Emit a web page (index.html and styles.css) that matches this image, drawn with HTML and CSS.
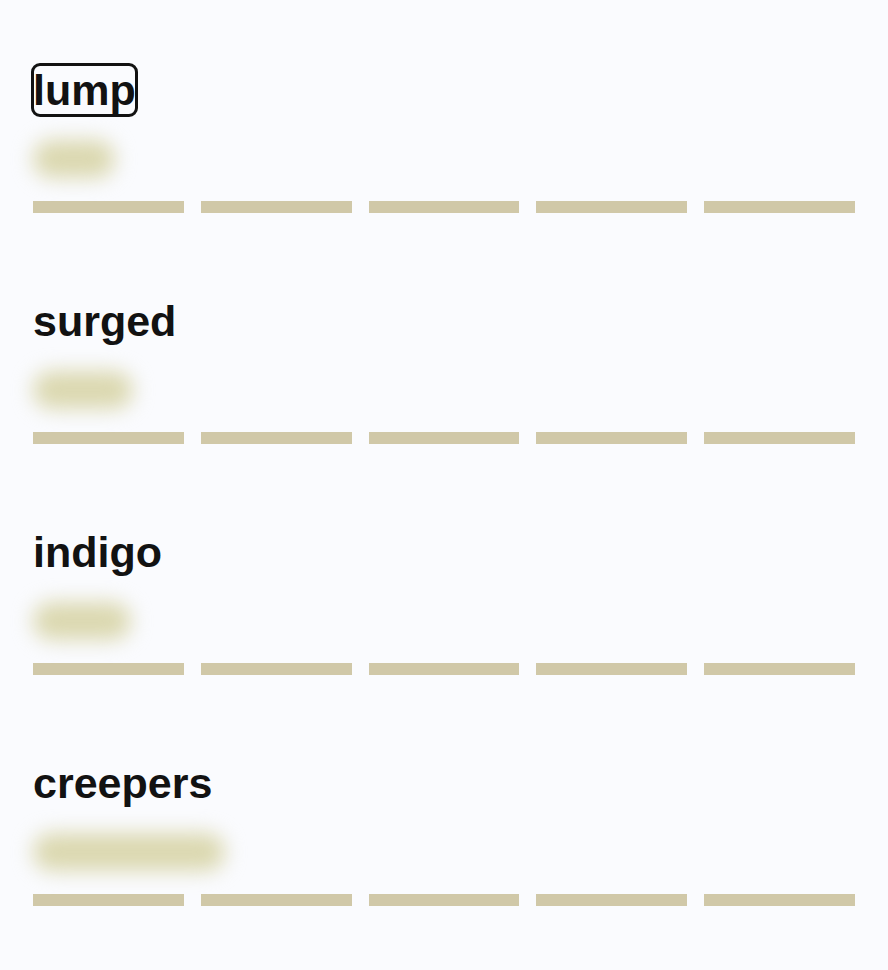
FILE: index.html
```html
<!DOCTYPE html>
<html lang="en">
<head>
<meta charset="utf-8">
<title>Words</title>
<link rel="stylesheet" href="styles.css">
</head>
<body>
<main class="list">
  <section class="item">
    <h2 class="word"><span class="word-text is-focused">lump</span></h2>
    <div class="blur blur-lump"></div>
    <div class="bars"><span></span><span></span><span></span><span></span><span></span></div>
  </section>
  <section class="item">
    <h2 class="word"><span class="word-text">surged</span></h2>
    <div class="blur blur-surged"></div>
    <div class="bars"><span></span><span></span><span></span><span></span><span></span></div>
  </section>
  <section class="item">
    <h2 class="word"><span class="word-text">indigo</span></h2>
    <div class="blur blur-indigo"></div>
    <div class="bars"><span></span><span></span><span></span><span></span><span></span></div>
  </section>
  <section class="item">
    <h2 class="word"><span class="word-text">creepers</span></h2>
    <div class="blur blur-creepers"></div>
    <div class="bars"><span></span><span></span><span></span><span></span><span></span></div>
  </section>
</main>
</body>
</html>
```
FILE: styles.css
```css
html, body {
  margin: 0;
  padding: 0;
  background: #fafbfe;
}
body {
  font-family: "Liberation Sans", Arial, sans-serif;
  color: #121212;
}
.list {
  display: flex;
  flex-direction: column;
  gap: 83px;
  padding: 65px 33px 0;
}
.item {
  display: flex;
  flex-direction: column;
}
.word {
  margin: 0;
  font-size: 43px;
  line-height: 50px;
  font-weight: 700;
  height: 50px;
}
.word-text {
  display: inline-block;
  border-radius: 7px;
}
.word-text.is-focused {
  outline: 3px solid #121212;
  outline-offset: -1px;
}
.blur {
  margin-top: 25px;
  height: 38px;
  border-radius: 19px;
  background: #dbd8b0;
  filter: blur(10px);
}
.blur-lump { width: 82px; }
.blur-surged { width: 100px; }
.blur-indigo { width: 98px; }
.blur-creepers { width: 192px; }
.bars {
  margin-top: 23px;
  display: grid;
  grid-template-columns: repeat(5, 1fr);
  gap: 17px;
}
.bars span {
  display: block;
  height: 12px;
  background: #d0c8a8;
}
```
